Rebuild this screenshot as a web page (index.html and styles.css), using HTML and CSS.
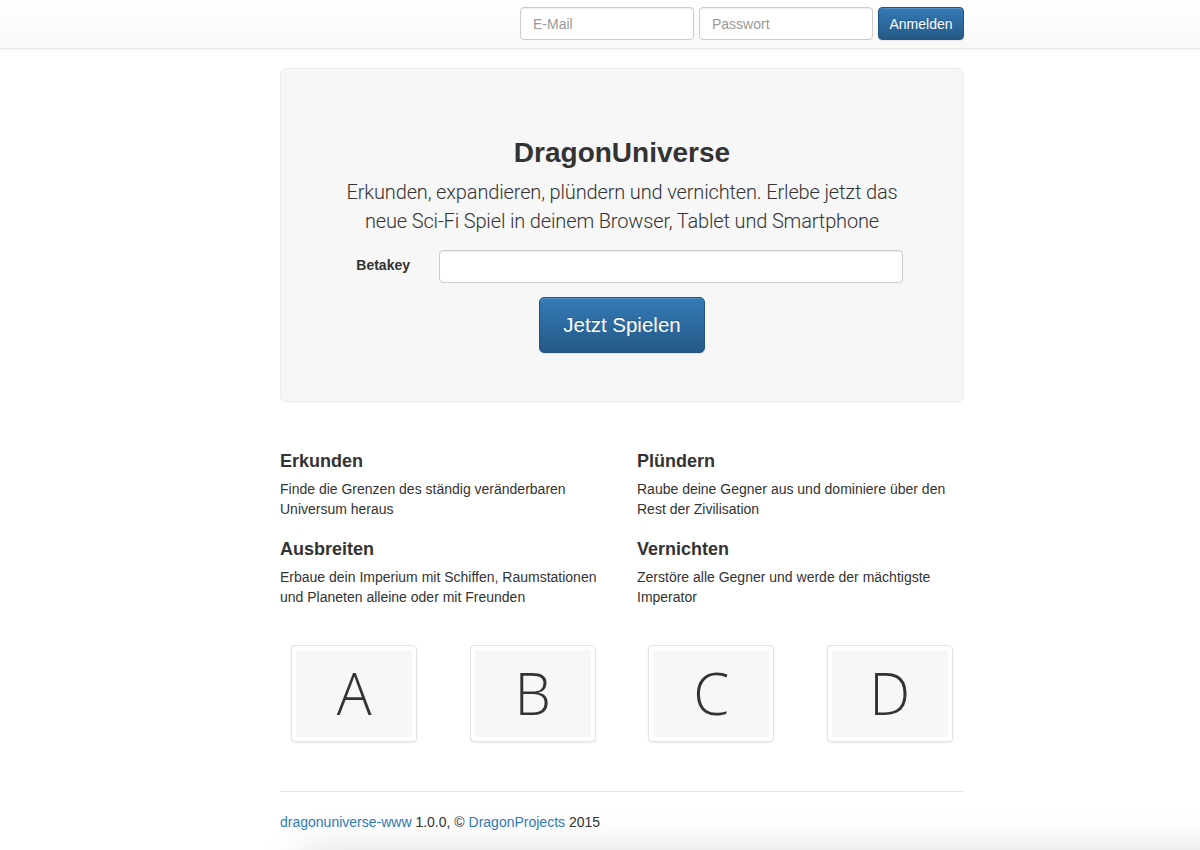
FILE: index.html
```html
<!DOCTYPE html>
<html lang="de">
<head>
<meta charset="utf-8">
<title>DragonUniverse</title>
<link rel="stylesheet" href="styles.css">
</head>
<body>
<header class="navbar">
  <div class="container navbar-inner">
    <form class="login-form">
      <input class="nav-input" type="text" placeholder="E-Mail">
      <input class="nav-input" type="password" placeholder="Passwort">
      <button class="btn btn-primary btn-nav" type="button">Anmelden</button>
    </form>
  </div>
</header>

<main class="container">
  <section class="jumbotron">
    <h1 class="title">DragonUniverse</h1>
    <p class="lead">Erkunden, expandieren, plündern und vernichten. Erlebe jetzt das neue Sci-Fi Spiel in deinem Browser, Tablet und Smartphone</p>
    <form class="beta-form">
      <label class="beta-label" for="betakey">Betakey</label>
      <input class="beta-input" id="betakey" type="text">
    </form>
    <div class="play-row">
      <button class="btn btn-primary btn-play" type="button">Jetzt Spielen</button>
    </div>
  </section>

  <section class="features">
    <div class="feature">
      <h3 class="feature-title">Erkunden</h3>
      <p class="feature-text">Finde die Grenzen des ständig veränderbaren Universum heraus</p>
    </div>
    <div class="feature">
      <h3 class="feature-title">Plündern</h3>
      <p class="feature-text">Raube deine Gegner aus und dominiere über den Rest der Zivilisation</p>
    </div>
    <div class="feature">
      <h3 class="feature-title">Ausbreiten</h3>
      <p class="feature-text">Erbaue dein Imperium mit Schiffen, Raumstationen und Planeten alleine oder mit Freunden</p>
    </div>
    <div class="feature">
      <h3 class="feature-title">Vernichten</h3>
      <p class="feature-text">Zerstöre alle Gegner und werde der mächtigste Imperator</p>
    </div>
  </section>

  <section class="thumbs">
    <div class="thumb-col"><div class="thumb"><div class="thumb-inner">A</div></div></div>
    <div class="thumb-col"><div class="thumb"><div class="thumb-inner">B</div></div></div>
    <div class="thumb-col"><div class="thumb"><div class="thumb-inner">C</div></div></div>
    <div class="thumb-col"><div class="thumb"><div class="thumb-inner">D</div></div></div>
  </section>

  <footer class="footer">
    <p class="footer-text"><a href="#">dragonuniverse-www</a> 1.0.0, © <a href="#">DragonProjects</a> 2015</p>
  </footer>
</main>
<div class="bottom-shadow"></div>
</body>
</html>
```

FILE: styles.css
```css
* { box-sizing: border-box; }

html, body {
  margin: 0;
  padding: 0;
  background: #fff;
}

body {
  font-family: "Liberation Sans", Arial, sans-serif;
  font-size: 14px;
  line-height: 1.42857;
  color: #333;
  overflow: hidden;
}

.container {
  width: 684px;
  margin-left: calc(50% - 320px);
}

/* Navbar */
.navbar {
  height: 49px;
  background: linear-gradient(to bottom, #ffffff 0%, #f8f8f8 100%);
  border-bottom: 1px solid #e7e7e7;
  box-shadow: 0 1px 5px rgba(0, 0, 0, 0.05);
}

.navbar-inner {
  display: flex;
  justify-content: flex-end;
  padding-top: 7px;
}

.login-form {
  display: flex;
  gap: 5px;
}

.nav-input {
  width: 174px;
  height: 33px;
  padding: 6px 12px;
  font-family: inherit;
  font-size: 14px;
  color: #555;
  background: #fff;
  border: 1px solid #ccc;
  border-radius: 4px;
  box-shadow: inset 0 1px 1px rgba(0, 0, 0, 0.075);
}

.nav-input::placeholder { color: #999; }

.btn {
  font-family: inherit;
  cursor: pointer;
  border-radius: 4px;
}

.btn-primary {
  color: #fff;
  background: linear-gradient(to bottom, #337ab7 0%, #265a88 100%);
  border: 1px solid #245580;
  text-shadow: 0 -1px 0 rgba(0, 0, 0, 0.2);
  box-shadow: inset 0 1px 0 rgba(255, 255, 255, 0.15), 0 1px 1px rgba(0, 0, 0, 0.075);
}

.btn-nav {
  width: 86px;
  height: 33px;
  font-size: 14px;
  padding: 0 10px;
}

/* Jumbotron */
.jumbotron {
  margin-top: 19px;
  padding: 48px 60px 48px;
  background: #f7f7f7;
  border: 1px solid #ebebeb;
  border-radius: 6px;
  text-align: center;
}

.title {
  margin: 21px 0 9px;
  font-size: 28px;
  font-weight: bold;
  line-height: 1.1;
  color: #333;
}

.lead {
  margin: 0 0 14px;
  font-family: Roboto, "Liberation Sans", sans-serif;
  font-weight: 300;
  font-size: 20px;
  letter-spacing: -0.15px;
  line-height: 29px;
  color: #333;
}

.beta-form {
  display: grid;
  grid-template-columns: 84px 1fr;
  align-items: center;
  margin: 0 0 14px;
}

.beta-label {
  padding-right: 15px;
  text-align: right;
  font-weight: bold;
  font-size: 14px;
}

.beta-input {
  margin-left: 14px;
  height: 33px;
  padding: 6px 12px;
  font-family: inherit;
  font-size: 14px;
  background: #fff;
  border: 1px solid #ccc;
  border-radius: 4px;
  box-shadow: inset 0 1px 1px rgba(0, 0, 0, 0.075);
}

.play-row {
  display: flex;
  justify-content: center;
}

.btn-play {
  height: 56px;
  padding: 0 23px;
  font-size: 20.5px;
  border-radius: 5px;
}

/* Features */
.features {
  display: grid;
  grid-template-columns: 1fr 1fr;
  column-gap: 30px;
  margin-top: 49px;
}

.feature-title {
  margin: 0 0 8px;
  font-size: 18px;
  font-weight: bold;
  line-height: 20px;
  color: #333;
}

.feature-text {
  margin: 0 0 20px;
  line-height: 20px;
}

/* Thumbnails */
.thumbs {
  display: grid;
  grid-template-columns: repeat(4, 178.5px);
  margin: 18px -15px 0;
}

.thumb-col {
  display: flex;
  justify-content: center;
}

.thumb {
  width: 126px;
  height: 97px;
  padding: 4px;
  background: #fff;
  border: 1px solid #e3e3e3;
  border-radius: 4px;
  box-shadow: 0 1px 2px rgba(0, 0, 0, 0.075);
}

.thumb-inner {
  height: 100%;
  display: flex;
  align-items: center;
  justify-content: center;
  background: #f7f7f7;
  font-family: "Open Sans", sans-serif;
  font-weight: 300;
  font-size: 58px;
  line-height: 1;
  color: #333;
}

/* Footer */
.footer {
  margin-top: 49px;
  border-top: 1px solid #e5e5e5;
  padding-top: 21px;
}

.footer-text {
  margin: 0;
}

.footer a {
  color: #337ab7;
  text-decoration: none;
}

.bottom-shadow {
  position: fixed;
  left: 300px;
  right: -60px;
  bottom: -60px;
  height: 60px;
  background: #fff;
  box-shadow: 0 0 40px rgba(0, 0, 0, 0.13);
}
```
